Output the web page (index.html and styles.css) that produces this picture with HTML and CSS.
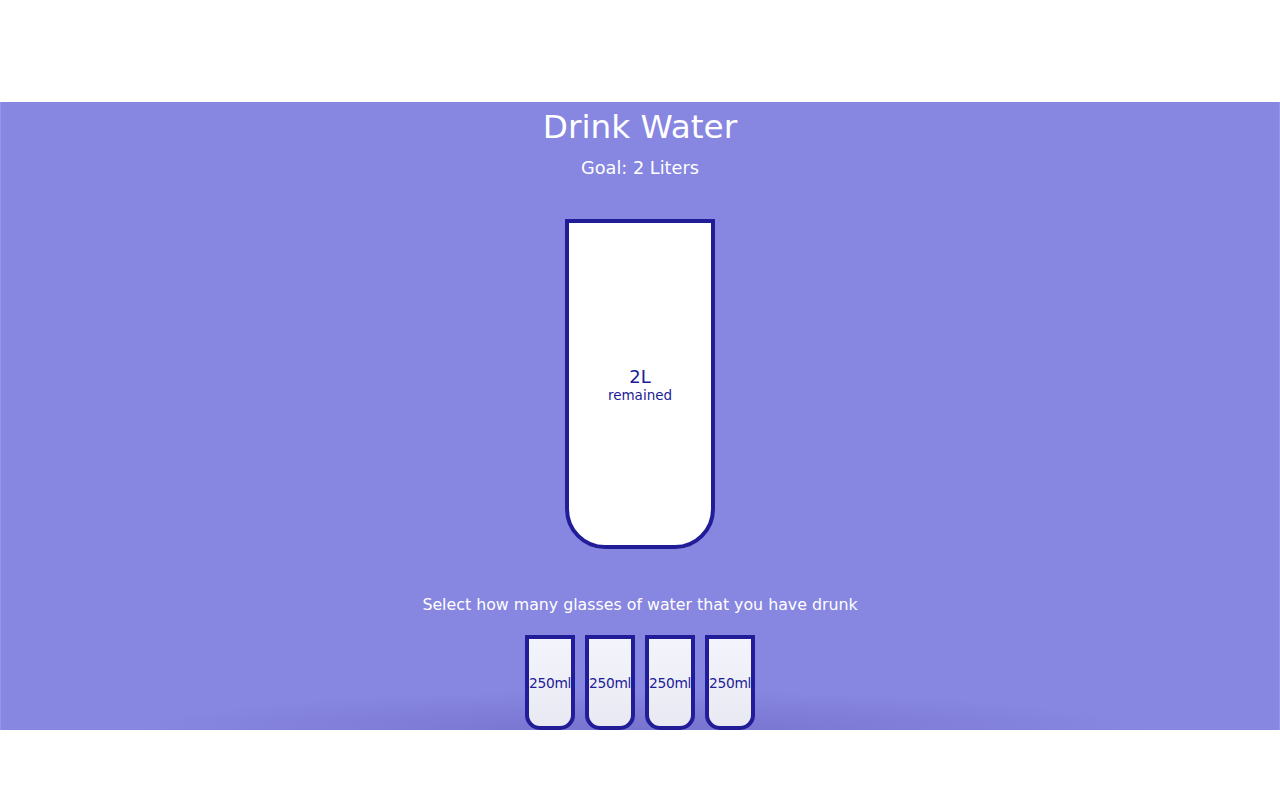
FILE: index.html
```html
<!DOCTYPE html>
<html lang="en">
<head>
<meta charset="UTF-8">
<title>Drink Water</title>
<link rel="stylesheet" href="styles.css">
</head>
<body>
<div class="stage">
  <main class="app">
    <h1 class="title">Drink Water</h1>
    <h3 class="goal">Goal: 2 Liters</h3>
    <div class="cup">
      <div class="remained">
        <span class="liters">2L</span>
        <small class="label">remained</small>
      </div>
    </div>
    <p class="text">Select how many glasses of water that you have drunk</p>
    <div class="cups">
      <div class="cup-small">250ml</div>
      <div class="cup-small">250ml</div>
      <div class="cup-small">250ml</div>
      <div class="cup-small">250ml</div>
    </div>
  </main>
</div>
</body>
</html>
```
FILE: styles.css
```css
* { box-sizing: border-box; }
html, body { margin: 0; padding: 0; background: #ffffff; }
body {
  font-family: "DejaVu Sans", "Open Sans", sans-serif;
  height: 800px;
  overflow: hidden;
}
.stage {
  margin-top: 102px;
  height: 628px;
  background: #8786e0;
  border-left: 1px solid #9594e6;
  border-right: 1px solid #9594e6;
  overflow: hidden;
  position: relative;
}
.stage::after {
  content: "";
  position: absolute;
  left: 130px;
  right: 130px;
  bottom: -40px;
  height: 80px;
  background: radial-gradient(ellipse at center, rgba(60,50,150,0.22) 0%, rgba(60,50,150,0) 70%);
  pointer-events: none;
}
.app {
  display: flex;
  flex-direction: column;
  align-items: center;
  color: #ffffff;
}
.title {
  margin: 5px 0 0;
  font-weight: 400;
  font-size: 32.7px;
  line-height: 40px;
}
.goal {
  margin: 10px 0 0;
  font-weight: 400;
  font-size: 17.7px;
  line-height: 22px;
}
.cup {
  margin-top: 40px;
  width: 150px;
  height: 330px;
  background: #ffffff;
  border: 4px solid #211c97;
  border-radius: 0 0 40px 40px;
  display: flex;
  align-items: center;
  justify-content: center;
  color: #211c97;
}
.remained {
  display: flex;
  flex-direction: column;
  align-items: center;
  text-align: center;
}
.liters { font-size: 18px; line-height: 22px; }
.label { font-size: 13.5px; line-height: 15px; }
.text {
  margin: 46px 0 0;
  font-size: 15.8px;
  line-height: 20px;
}
.cups {
  margin-top: 20px;
  display: flex;
  gap: 10px;
  position: relative;
  z-index: 1;
}
.cup-small {
  width: 50px;
  height: 95px;
  border: 4px solid #211c97;
  border-radius: 0 0 15px 15px;
  background: linear-gradient(#f4f4fc, #e9e9f3);
  color: #211c97;
  font-size: 13.8px;
  display: flex;
  align-items: center;
  justify-content: center;
  white-space: nowrap;
  letter-spacing: -0.3px;
}
```
